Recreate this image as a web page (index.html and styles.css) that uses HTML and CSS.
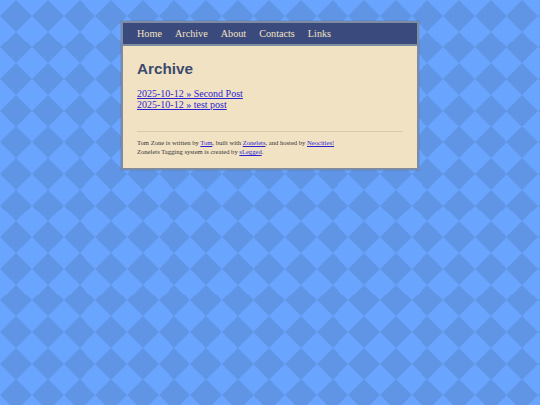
FILE: index.html
```html
<!DOCTYPE html>
<html lang="en">
<head>
<meta charset="utf-8">
<title>Archive</title>
<link rel="stylesheet" href="styles.css">
</head>
<body>
<div class="page">
  <nav class="nav">
    <a href="#">Home</a>
    <a href="#">Archive</a>
    <a href="#">About</a>
    <a href="#">Contacts</a>
    <a href="#">Links</a>
  </nav>
  <main class="content">
    <h1 class="title">Archive</h1>
    <ul class="posts">
      <li><a href="#">2025-10-12 » Second Post</a></li>
      <li><a href="#">2025-10-12 » test post</a></li>
    </ul>
    <footer class="foot">
      <p>Tom Zone is written by <a href="#">Tom</a>, built with <a href="#">Zonelets</a>, and hosted by <a href="#">Neocities!</a></p>
      <p>Zonelets Tagging system is created by <a href="#">sLegged</a>.</p>
    </footer>
  </main>
</div>
</body>
</html>
```
FILE: styles.css
```css
html, body { margin: 0; padding: 0; }
body {
  min-height: 405px;
  background-color: #69a5ff;
  background-image: url("data:image/svg+xml,%3Csvg xmlns='http://www.w3.org/2000/svg' width='32' height='32'%3E%3Cpath d='M16 0L32 16L16 32L0 16Z' fill='%235f95e4'/%3E%3C/svg%3E");
  background-size: 31.64px 31.64px;
  background-position: 0.5px 0;
  font-family: "Liberation Serif", serif;
  overflow: hidden;
}
.page {
  box-sizing: border-box;
  width: 298px;
  margin: 21px auto 0;
  border: 2px solid #7d8ba3;
  background: #f2e2c4;
  box-shadow: 0 0 1px #4a5a80;
}
.nav {
  display: flex;
  gap: 13px;
  padding: 0 14px;
  height: 21px;
  align-items: center;
  background: #3b4a7d;
  border-bottom: 2px solid #7d8ba3;
}
.nav a { color: #f2e2c4; text-decoration: none; font-size: 10.2px; }
.content { padding: 13px 14px 12px; }
.title {
  margin: 0;
  font: bold 15.3px/19px "Liberation Sans", sans-serif;
  color: #3b4a6d;
}
.posts { list-style: none; margin: 11px 0 0; padding: 0; font-size: 10px; line-height: 10.5px; }
.posts a { color: #2a1fd0; }
.foot { margin-top: 21px; border-top: 1px solid #d8c9ab; padding-top: 6px; font-size: 6.6px; line-height: 9px; color: #333; }
.foot p { margin: 0; }
.foot a { color: #2a1fd0; }
```
